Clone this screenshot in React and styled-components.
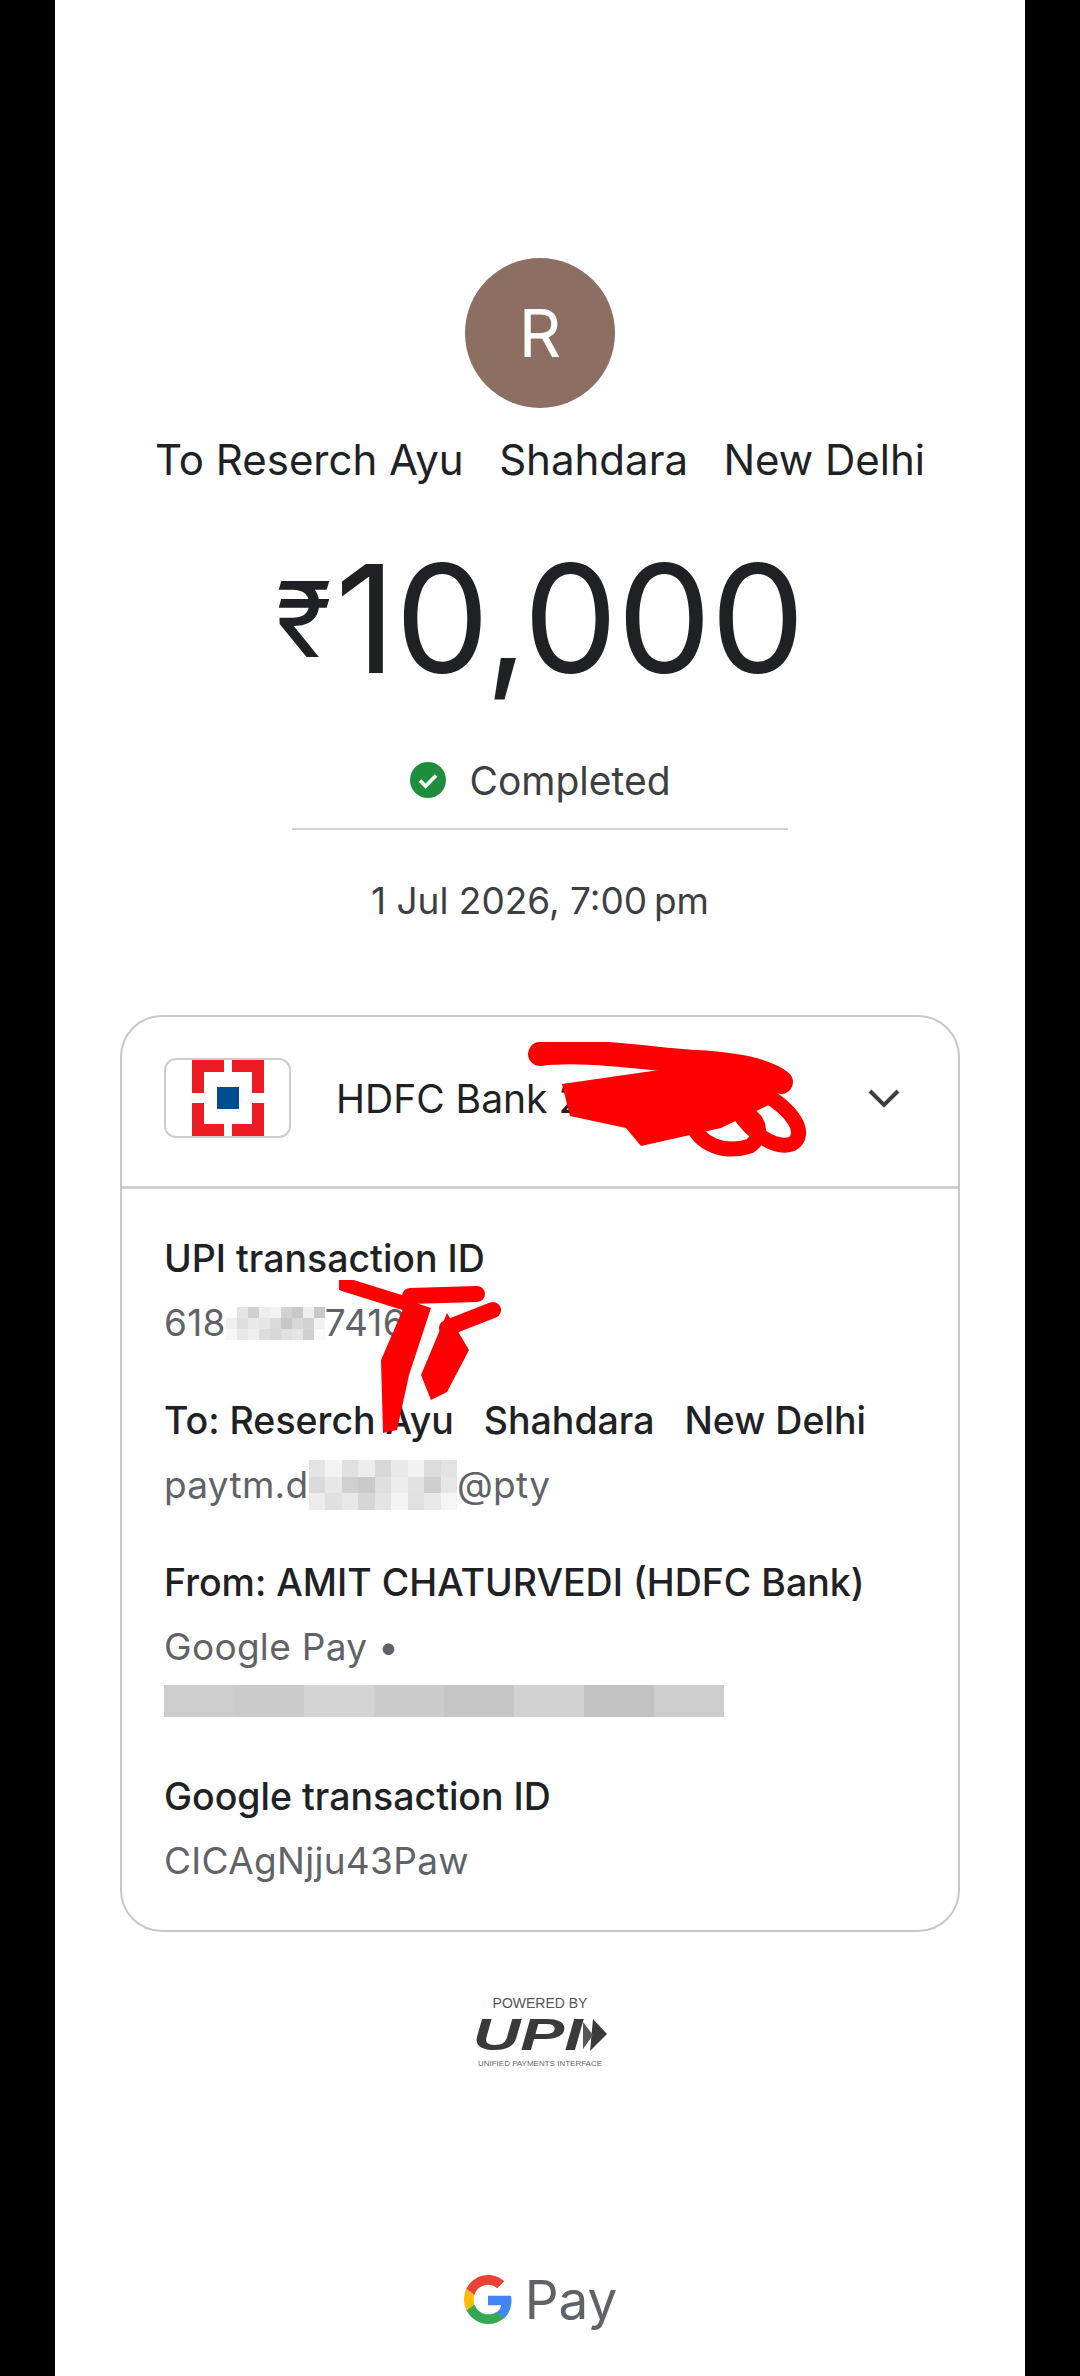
import React from 'react';
import styled, { createGlobalStyle } from 'styled-components';

const GlobalStyle = createGlobalStyle`
  html, body {
    margin: 0;
    padding: 0;
    background: #000;
  }
`;

const fontStack = 'Inter, "Open Sans", Roboto, sans-serif';

const Page = styled.div`
  width: 1080px;
  height: 2376px;
  background: #000;
  display: flex;
  justify-content: flex-start;
  overflow: hidden;
  font-family: ${fontStack};
`;

const Panel = styled.main`
  width: 970px;
  height: 100%;
  margin-left: 55px;
  padding-top: 258px;
  box-sizing: border-box;
  background: #fff;
  display: flex;
  flex-direction: column;
  align-items: center;
`;

const Avatar = styled.div`
  width: 150px;
  height: 150px;
  border-radius: 50%;
  background: #8d6e63;
  color: #fff;
  font-size: 66px;
  display: flex;
  align-items: center;
  justify-content: center;
`;

const Payee = styled.div`
  margin-top: 22px;
  font-size: 42px;
  line-height: 60px;
  color: #202124;
  white-space: pre;
`;

const Amount = styled.div`
  margin-top: 39px;
  font-size: 150px;
  font-weight: 400;
  line-height: 180px;
  letter-spacing: -1px;
  color: #202124;
  display: flex;
  align-items: center;
`;

const Rupee = styled.span`
  font-size: 104px;
  margin-right: 4px;
`;

const Status = styled.div`
  margin-top: 41px;
  height: 60px;
  display: flex;
  align-items: center;
  gap: 22px;
  font-size: 39px;
  color: #3c4043;
`;

const Divider = styled.hr`
  width: 496px;
  height: 2px;
  margin: 18px 0 0;
  border: 0;
  background: #d4d4d4;
`;

const DateLine = styled.div`
  margin-top: 41px;
  font-size: 37px;
  line-height: 60px;
  color: #3c4043;
`;

const Card = styled.section`
  position: relative;
  width: 840px;
  height: 917px;
  margin-top: 84px;
  box-sizing: border-box;
  border: 2px solid #c8c8c8;
  border-radius: 42px;
`;

const CardHeader = styled.div`
  height: 172px;
  padding: 0 42px 7px;
  box-sizing: border-box;
  display: flex;
  align-items: center;
  border-bottom: 3px solid #cfcfcf;
`;

const BankLogo = styled.div`
  width: 127px;
  height: 80px;
  box-sizing: border-box;
  border: 2px solid #cdcdcd;
  border-radius: 12px;
  display: flex;
  align-items: center;
  justify-content: center;
`;

const BankName = styled.div`
  flex: 1;
  margin-left: 45px;
  font-size: 39px;
  color: #202124;
`;

const Chevron = styled.svg`
  margin-right: 14px;
`;

const CardBody = styled.div`
  padding: 38px 42px 0;
  display: flex;
  flex-direction: column;
`;

const Label = styled.div`
  font-size: 37.5px;
  font-weight: 500;
  line-height: 64px;
  color: #202124;
  white-space: pre;
`;

const Value = styled.div`
  font-size: 37px;
  line-height: 64px;
  letter-spacing: 0.3px;
  color: #5f6368;
  margin-bottom: ${({ $last }) => ($last ? '0' : '34px')};
  display: flex;
  align-items: center;
`;

const Mosaic = styled.span`
  display: inline-grid;
  grid-template-columns: repeat(${({ $cols }) => $cols}, ${({ $size }) => $size}px);
  grid-auto-rows: ${({ $size }) => $size}px;
`;

const Cell = styled.span`
  background: ${({ $shade }) => $shade};
`;

const BlurBar = styled.div`
  display: flex;
  width: 560px;
  height: 32px;
  margin: 6px 0 48px;
`;

const BarCell = styled.span`
  flex: 1;
  background: ${({ $shade }) => $shade};
`;

const Scribble = styled.svg`
  position: absolute;
  left: ${({ $left }) => $left}px;
  top: ${({ $top }) => $top}px;
  pointer-events: none;
`;

const UpiBlock = styled.div`
  margin-top: 64px;
  width: 140px;
  display: flex;
  flex-direction: column;
  align-items: center;
  color: #3c4043;
  font-family: "Liberation Sans", Arial, sans-serif;
`;

const UpiPowered = styled.div`
  font-size: 14px;
  line-height: 15px;
  color: #555;
`;

const UpiMark = styled.div`
  display: flex;
  align-items: center;
  height: 48px;
`;

const UpiLetters = styled.span`
  display: inline-block;
  font-size: 44px;
  font-weight: 700;
  font-style: italic;
  line-height: 48px;
  color: #3a3a3d;
  transform: scaleX(1.5);
  margin: 0 18px;
`;

const UpiTagline = styled.div`
  font-size: 8px;
  line-height: 9px;
  white-space: nowrap;
  color: #666;
`;

const GooglePay = styled.div`
  margin-top: auto;
  margin-bottom: 44px;
  display: flex;
  align-items: center;
  gap: 12px;
`;

const PayWord = styled.span`
  font-family: ${fontStack};
  font-size: 53px;
  line-height: 64px;
  color: #5f6368;
`;

const firstShades = [
  '#fff', '#e4e4e4', '#cfcfcf', '#eee', '#f2f2f2', '#d2d2d2', '#c9c9c9', '#eee', '#c8c8c8',
  '#f0f0f0', '#dedede', '#e9e9e9', '#e6e6e6', '#dadada', '#c6c6c6', '#d8d8d8', '#d2d2d2', '#f2f2f2',
  '#f6f6f6', '#e8e8e8', '#efefef', '#ddd', '#d8d8d8', '#e0e0e0', '#e6e6e6', '#cfcfcf', '#fafafa',
];

const secondShades = [
  '#e4e4e4', '#f3f3f3', '#e0e0e0', '#ececec', '#d8d8d8', '#e9e9e9', '#f2f2f2', '#dcdcdc', '#e3e3e3',
  '#dadada', '#e7e7e7', '#d0d0d0', '#c9c9c9', '#dfdfdf', '#ededed', '#e2e2e2', '#cfcfcf', '#e6e6e6',
  '#ececec', '#e0e0e0', '#e8e8e8', '#d6d6d6', '#e4e4e4', '#f4f4f4', '#e1e1e1', '#e9e9e9', '#f5f5f5',
];

const barShades = ['#cdcdcd', '#cbcbcb', '#d4d4d4', '#cccccc', '#c6c6c6', '#d2d2d2', '#c2c2c2', '#cdcdcd'];

function BlurCells({ shades, size }) {
  return (
    <Mosaic $cols={9} $size={size}>
      {shades.map((shade, i) => <Cell key={i} $shade={shade} />)}
    </Mosaic>
  );
}

export default function App() {
  return (
    <Page>
      <GlobalStyle />
      <Panel>
        <Avatar>R</Avatar>
        <Payee>To Reserch Ayu   Shahdara   New Delhi</Payee>
        <Amount>
          <Rupee>₹</Rupee>
          10,000
        </Amount>
        <Status>
          <svg width="38" height="38" viewBox="0 0 38 38">
            <circle cx="19" cy="19" r="18" fill="#1e8e3e" />
            <path d="M11 19.5l5.6 5.6L27 14.5" fill="none" stroke="#fff" strokeWidth="3.6" />
          </svg>
          Completed
        </Status>
        <Divider />
        <DateLine>1 Jul 2026, 7:00{'\u202f'}pm</DateLine>

        <Card>
          <CardHeader>
            <BankLogo>
              <svg width="76" height="76" viewBox="0 0 76 76">
                <path d="M2 0h32v12H14v21H2zM42 0h32v33H62V12H42zM2 43h12v21h20v12H2zM62 43h12v33H42V64h20z" fill="#ed1c24" />
                <rect x="27" y="27" width="22" height="22" fill="#004c8f" />
              </svg>
            </BankLogo>
            <BankName>HDFC Bank 2</BankName>
            <Chevron width="36" height="36" viewBox="0 0 36 36">
              <path d="M4 11l14 14 14-14" fill="none" stroke="#3c4043" strokeWidth="4" />
            </Chevron>
          </CardHeader>
          <CardBody>
            <Label>UPI transaction ID</Label>
            <Value>
              618
              <BlurCells shades={firstShades} size={11} />
              7416
            </Value>
            <Label>To: Reserch Ayu   Shahdara   New Delhi</Label>
            <Value>
              paytm.d
              <BlurCells shades={secondShades} size={16.5} />
              @pty
            </Value>
            <Label>From: AMIT CHATURVEDI (HDFC Bank)</Label>
            <Value $last>Google Pay •</Value>
            <BlurBar>
              {barShades.map((shade, i) => <BarCell key={i} $shade={shade} />)}
            </BlurBar>
            <Label>Google transaction ID</Label>
            <Value $last>CICAgNjju43Paw</Value>
          </CardBody>

          <Scribble $left={404} $top={25} width="284" height="116" viewBox="0 0 284 116">
            <path d="M36 42L175 22 255 32 245 62 195 86 115 104 100 86 44 74z" fill="#fe0000" />
            <path d="M14 12C60 6 130 18 170 20S240 28 255 40" fill="none" stroke="#fe0000" strokeWidth="24" strokeLinecap="round" />
            <path d="M235 50C268 68 282 92 266 102 248 108 225 90 212 70M165 78C172 104 200 112 224 104 238 94 232 80 226 75" fill="none" stroke="#fe0000" strokeWidth="15" strokeLinecap="round" />
          </Scribble>
          <Scribble $left={217} $top={263} width="162" height="158" viewBox="0 0 162 158">
            <path d="M4 4L71 25" fill="none" stroke="#fe0000" strokeWidth="14" strokeLinecap="round" />
            <path d="M71 16L138 14" fill="none" stroke="#fe0000" strokeWidth="16" strokeLinecap="round" />
            <path d="M154 30L108 48" fill="none" stroke="#fe0000" strokeWidth="16" strokeLinecap="round" />
            <path d="M68 20L92 28 70 95 58 150 44 153 42 80zM108 33L130 70 108 112 92 120 82 95z" fill="#fe0000" />
          </Scribble>
        </Card>

        <UpiBlock>
          <UpiPowered>POWERED BY</UpiPowered>
          <UpiMark>
            <UpiLetters>UPI</UpiLetters>
            <svg width="24" height="32" viewBox="0 0 24 32">
              <path d="M10 0l14 15-17 17z" fill="#3a3a3d" />
              <path d="M0 3l10 13L0 30z" fill="#55555a" />
            </svg>
          </UpiMark>
          <UpiTagline>UNIFIED PAYMENTS INTERFACE</UpiTagline>
        </UpiBlock>

        <GooglePay>
          <svg width="50" height="50" viewBox="0 0 48 48">
            <path fill="#4285f4" d="M46.5 24.5c0-1.6-.1-3.1-.4-4.500H24v9h12.700c-.6 2.900-2.200 5.400-4.700 7l7.400 5.700c4.300-4 7.100-9.900 7.100-17.200z" />
            <path fill="#34a853" d="M24 47c6.200 0 11.500-2 15.400-5.800L32 35.500c-2.100 1.400-4.800 2.200-8 2.200-6.100 0-11.300-4.100-13.100-9.700l-7.600 5.900C7.100 41.500 15 47 24 47z" />
            <path fill="#fbbc04" d="M10.900 28c-.5-1.400-.7-2.900-.7-4.500s.3-3.100.7-4.500l-7.600-5.900C1.800 16.200 1 19.700 1 23.500s.8 7.300 2.300 10.400z" />
            <path fill="#ea4335" d="M24 9.300c3.400 0 6.500 1.200 8.900 3.500l6.700-6.700C35.500 2.300 30.200 0 24 0 15 0 7.100 5.500 3.300 13.100l7.600 5.900C12.700 13.400 17.900 9.300 24 9.300z" />
          </svg>
          <PayWord>Pay</PayWord>
        </GooglePay>
      </Panel>
    </Page>
  );
}
